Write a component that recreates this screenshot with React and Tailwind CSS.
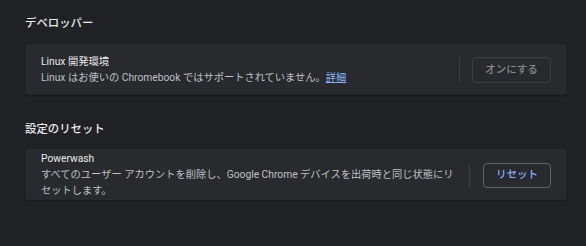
export default function App() {
  const font = { fontFamily: 'Roboto, "Noto Sans CJK JP", sans-serif' };
  return (
    <div
      className="w-[586px] h-[246px] bg-[#202124] pl-[25px] pr-[19px] pt-[13px] text-[#e8eaed] overflow-hidden"
      style={font}
    >
      <div className="h-[20px] leading-[20px] text-[11.4px] font-medium text-[#e8eaed]">デベロッパー</div>
      <div className="mt-[11px] h-[51px] rounded-[4px] bg-[#292a2d] shadow-[0_1px_2px_rgba(0,0,0,0.3)] flex items-center pl-4 pr-4">
        <div className="flex-1 min-w-0 text-[10.25px] leading-[16px]">
          <div className="text-[#e8eaed]">Linux 開発環境</div>
          <div className="text-[#bdc1c6]">
            Linux はお使いの Chromebook ではサポートされていません。
            <span className="text-[#8ab4f8] underline">詳細</span>
          </div>
        </div>
        <div className="w-px h-[25px] bg-[#3c4043] ml-[12px] mr-[12px]" />
        <div className="w-[79px] h-[26px] rounded-[4px] border border-[#3c4043] flex items-center justify-center text-[10.5px] font-medium text-[#868a8f]">
          オンにする
        </div>
      </div>

      <div className="mt-[24px] h-[20px] leading-[20px] text-[11.4px] font-medium text-[#e8eaed]">設定のリセット</div>
      <div className="mt-[10px] min-h-[51px] rounded-[4px] bg-[#292a2d] shadow-[0_1px_2px_rgba(0,0,0,0.3)] flex items-center pl-4 pr-4 pt-[2px] pb-px">
        <div className="flex-1 min-w-0 text-[10.25px] leading-[16px]">
          <div className="text-[#e8eaed]">Powerwash</div>
          <div className="text-[#bdc1c6]">
            すべてのユーザー アカウントを削除し、Google Chrome デバイスを出荷時と同じ状態にリセットします。
          </div>
        </div>
        <div className="w-px h-[25px] bg-[#3c4043] ml-[12px] mr-[13px]" />
        <div className="w-[68px] h-[25px] rounded-[4px] border border-[#5f6368] flex items-center justify-center text-[10.5px] font-medium text-[#8ab4f8]">
          リセット
        </div>
      </div>
    </div>
  );
}
